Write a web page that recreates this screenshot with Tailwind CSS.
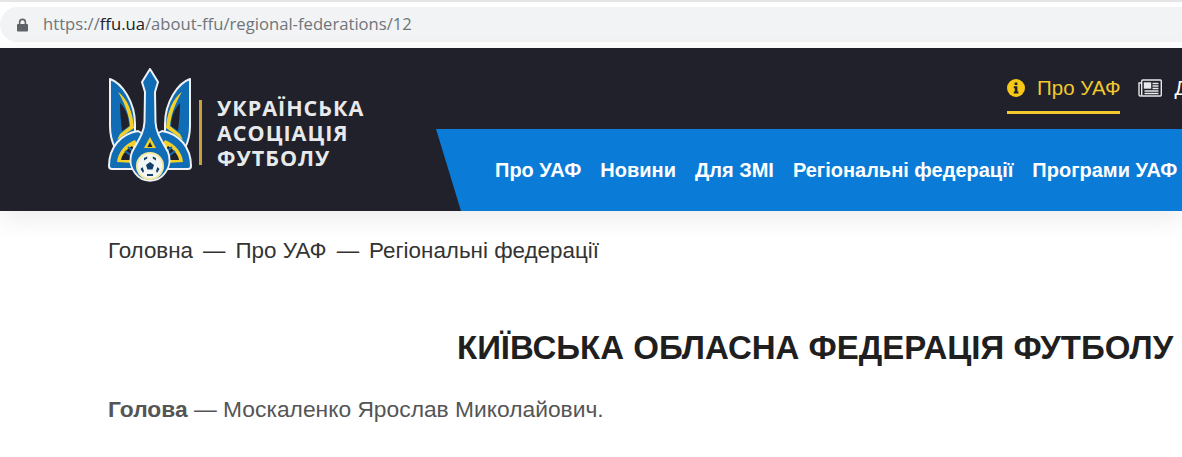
<!DOCTYPE html>
<html lang="uk">
<head>
    <meta charset="UTF-8">
    <title>Київська обласна федерація футболу</title>
    <script src="https://cdn.jsdelivr.net/npm/@tailwindcss/browser@4"></script>
</head>
<body class="bg-white w-[1182px] h-[457px] overflow-hidden font-['Liberation_Sans',Arial,sans-serif]">

    <!-- Адресний рядок -->
    <div class="h-[48px] pt-[5px] bg-white border-t-[2px] border-t-[#e4e5e7]">
        <div class="h-[35px] flex items-center rounded-l-full bg-[#f1f3f4] pl-[17px] font-['Open_Sans',sans-serif] text-[16.65px] text-[#70757a]">
            <svg class="w-[11px] h-[14px] mr-[15px]" viewBox="0 0 12 14" fill="#5f6368">
                <path d="M2 6V4a4 4 0 0 1 8 0v2h1a1 1 0 0 1 1 1v6a1 1 0 0 1-1 1H1a1 1 0 0 1-1-1V7a1 1 0 0 1 1-1zm1.7 0h4.6V4a2.3 2.3 0 0 0-4.6 0z"/>
            </svg>
            <span>https://<span class="text-[#202124]">ffu.ua</span>/about-ffu/regional-federations/12</span>
        </div>
    </div>

    <!-- Шапка -->
    <header class="relative h-[163px] bg-[#20212b] shadow-[0_8px_24px_rgba(0,0,0,0.08)] flex">
        <div class="w-[436px] shrink-0 pl-[108px] pt-[20px] flex items-start">
            <svg class="w-[84px] h-[118px] shrink-0" viewBox="0 0 84 118">
                <!-- ліве крило -->
                <path d="M2 11 C14 15 27 34 27 56 L27 64 L7 80 C3 72 2 66 2 58 Z" fill="#0f6cb5" stroke="#eef2f4" stroke-width="2" stroke-linejoin="round"/>
                <path d="M10 24 C19 30 25 44 26 60 L9 72 L12 66 L22 58 C21 46 16 34 10 24 Z" fill="#f3cf2a"/>
                <path d="M12 35 C18 41 21 50 21 58 L14 63 C13 54 12 44 12 35 Z" fill="#20212b"/>
                <!-- праве крило -->
                <path d="M82 11 C70 15 57 34 57 56 L57 64 L77 80 C81 72 82 66 82 58 Z" fill="#0f6cb5" stroke="#eef2f4" stroke-width="2" stroke-linejoin="round"/>
                <path d="M74 24 C65 30 59 44 58 60 L75 72 L72 66 L62 58 C63 46 68 34 74 24 Z" fill="#f3cf2a"/>
                <path d="M72 35 C66 41 63 50 63 58 L70 63 C71 54 72 44 72 35 Z" fill="#20212b"/>
                <!-- основа -->
                <path d="M1 98 C1 80 12 66 30 63 L42 70 L54 63 C72 66 83 80 83 98 C83 100 82 101 80 101 L4 101 C2 101 1 100 1 98 Z" fill="#0f6cb5" stroke="#eef2f4" stroke-width="2" stroke-linejoin="round"/>
                <path d="M9 94 C10 84 17 76 27 72 L34 84 L26 95 Z" fill="#f3cf2a"/>
                <path d="M75 94 C74 84 67 76 57 72 L50 84 L58 95 Z" fill="#f3cf2a"/>
                <path d="M13 92 C14 86 19 81 24 78 L28 84 L23 92 Z" fill="#20212b"/>
                <path d="M71 92 C70 86 65 81 60 78 L56 84 L61 92 Z" fill="#20212b"/>
                <path d="M20 79 L27 85 M17 83 L25 89 M64 79 L57 85 M67 83 L59 89" stroke="#0f6cb5" stroke-width="2"/>
                <!-- центральний зубець -->
                <path d="M42 1 L50 14 L47 24 L47.5 54 C48 66 55 74 60 84 C63 92 61 100 57 105 A18.5 18.5 0 0 1 27 105 C23 100 21 92 24 84 C29 74 36 66 36.5 54 L37 24 L34 14 Z" fill="#0f6cb5" stroke="#eef2f4" stroke-width="2" stroke-linejoin="round"/>
                <path d="M42 69 L48 80 H36 Z" fill="#f3cf2a"/>
                <path d="M42 74 L44.5 79 H39.5 Z" fill="#20212b"/>
                <circle cx="42" cy="98" r="14" fill="#f3e9a0"/>
                <circle cx="42" cy="98" r="12" fill="#f4f6f6"/>
                <path d="M42 94 l4 3 -1.5 4.6 h-5 l-1.5 -4.6 Z" fill="#123f6b"/>
                <path d="M36 90 l3.2 -1.5 v2 l-3.2 2 Z M48 90 l-3.2 -1.5 v2 l3.2 2 Z M32.5 101 l2 -2 1.5 4 -1 2 Z M51.5 101 l-2 -2 -1.5 4 1 2 Z M39 108 h6 v-2 h-6 Z" fill="#123f6b"/>
            </svg>
            <div class="w-[3px] h-[65px] mt-[32px] ml-[7px] bg-[#c9a13b]"></div>
            <div class="ml-[15px] mt-[27px] text-[#e8e9ea] font-['Open_Sans',sans-serif] font-bold text-[21.5px] leading-[25px] tracking-[1px] whitespace-nowrap">
                <div>УКРАЇНСЬКА</div>
                <div>АСОЦІАЦІЯ</div>
                <div>ФУТБОЛУ</div>
            </div>
        </div>

        <div class="flex-1 flex flex-col min-w-0">
            <!-- Верхнє меню -->
            <div class="h-[81px] flex pl-[571px] whitespace-nowrap overflow-hidden">
                <div class="h-[66px] flex items-center gap-[12px] border-b-[3px] border-[#f2c92e] pt-[17px] text-[#f2c92e] text-[20.5px] shrink-0">
                    <svg class="w-[18px] h-[18px]" viewBox="0 0 18 18">
                        <circle cx="9" cy="9" r="9" fill="#f7c815"/>
                        <path d="M7.6 3.4h2.8v2.5H7.6zM6.8 7.3h3.6v5.3h1v1.9H6.8v-1.9h1v-3.4h-1z" fill="#20212b"/>
                    </svg>
                    <span>Про УАФ</span>
                </div>
                <div class="h-[66px] ml-[18px] flex items-center gap-[12px] pt-[14px] text-white text-[20.5px] shrink-0">
                    <svg class="w-[24px] h-[18px]" viewBox="0 0 24 18" fill="none" stroke="#e8e9ea" stroke-width="1.4">
                        <rect x="3.7" y="1" width="19.6" height="16" rx="1"/>
                        <path d="M3.7 4H1v11.5A1.5 1.5 0 0 0 2.5 17h1.2"/>
                        <rect x="6.5" y="4" width="6" height="5" fill="#e8e9ea"/>
                        <path d="M14.5 4.5h6M14.5 7h6M14.5 9.5h6M6.5 12h14M6.5 14.5h14"/>
                    </svg>
                    <span>Для ЗМІ</span>
                </div>
            </div>
            <!-- Синє меню -->
            <nav class="h-[82px] bg-[#0a7bd6] [clip-path:polygon(0_0,100%_0,100%_100%,25px_100%)] flex items-center pl-[59px] gap-[19px] text-white font-bold text-[20px] whitespace-nowrap overflow-hidden">
                <a>Про УАФ</a>
                <a>Новини</a>
                <a>Для ЗМІ</a>
                <a>Регіональні федерації</a>
                <a>Програми УАФ</a>
            </nav>
        </div>
    </header>

    <!-- Хлібні крихти -->
    <div class="pl-[108px] pt-[26px] flex gap-[10px] text-[22.4px] leading-[28px] text-[#333]">
        <span>Головна</span><span>—</span><span>Про УАФ</span><span>—</span><span>Регіональні федерації</span>
    </div>

    <main class="pl-[108px]">
        <h1 class="mt-[63px] ml-[349px] text-[33px] leading-[40px] font-bold text-[#1f1f1f] whitespace-nowrap">КИЇВСЬКА ОБЛАСНА ФЕДЕРАЦІЯ ФУТБОЛУ</h1>
        <p class="mt-[27px] text-[22.8px] leading-[28px] text-[#555]"><b>Голова</b> — Москаленко Ярослав Миколайович.</p>
    </main>
</body>
</html>
